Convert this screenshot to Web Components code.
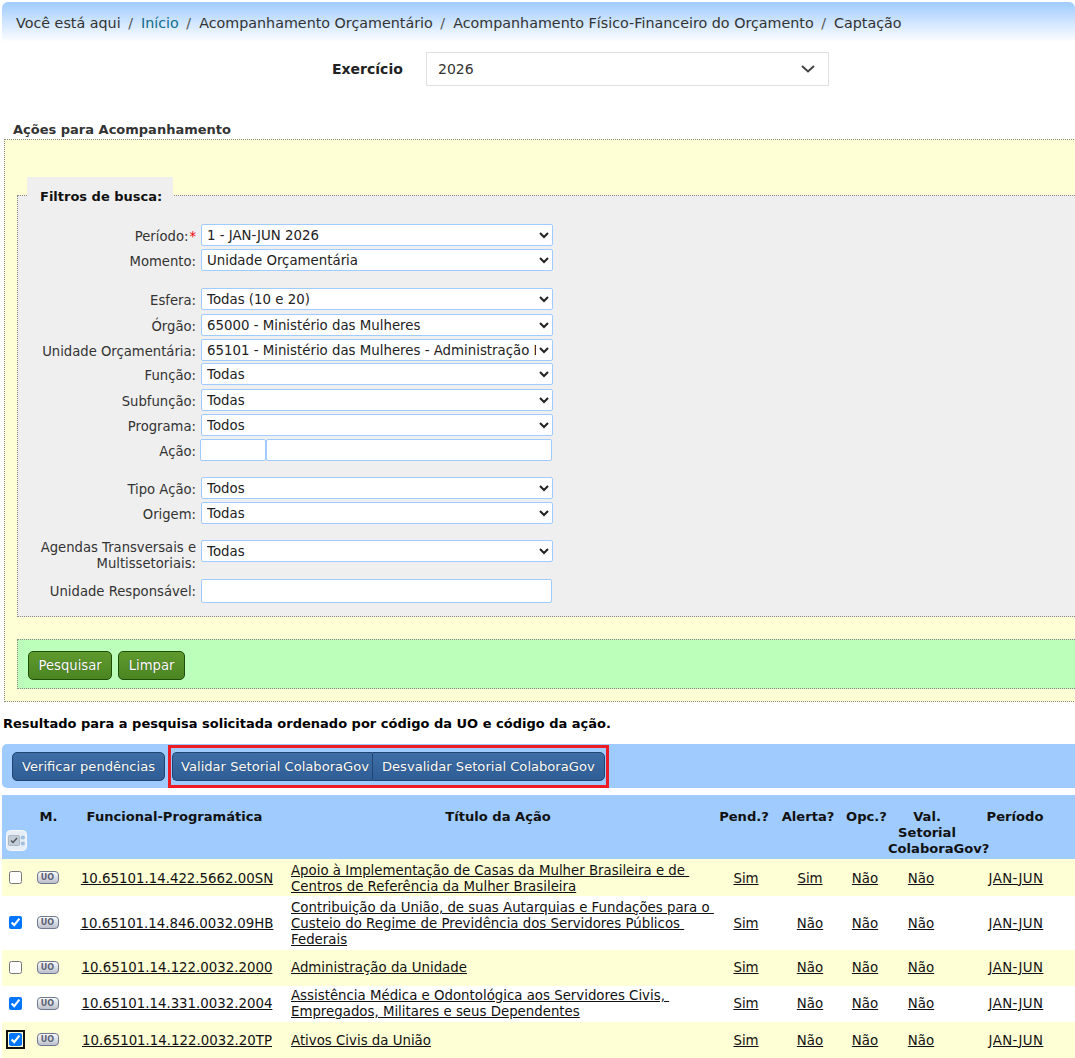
<!DOCTYPE html>
<html lang="pt-BR">
<head>
<meta charset="utf-8">
<title>Captação</title>
<style>
  html, body { margin: 0; padding: 0; overflow: hidden; background: #fff; height: 1058px; }
  body { font-family: "DejaVu Sans", Verdana, sans-serif; font-size: 13px; color: #000; }
</style>
</head>
<body>
<app-page>
  <bread-crumb>
    <span>Você está aqui</span>
    <a>Início</a>
    <span>Acompanhamento Orçamentário</span>
    <span>Acompanhamento Físico-Financeiro do Orçamento</span>
    <span>Captação</span>
  </bread-crumb>
  <year-picker label="Exercício" value="2026"></year-picker>
  <action-panel title="Ações para Acompanhamento">
    <filter-box legend="Filtros de busca:">
      <filter-row label="Período:" required value="1 - JAN-JUN 2026"></filter-row>
      <filter-row label="Momento:" value="Unidade Orçamentária"></filter-row>
      <filter-row label="Esfera:" value="Todas (10 e 20)" group></filter-row>
      <filter-row label="Órgão:" value="65000 - Ministério das Mulheres" style="margin-top:1px"></filter-row>
      <filter-row label="Unidade Orçamentária:" value="65101 - Ministério das Mulheres - Administração Direta"></filter-row>
      <filter-row label="Função:" value="Todas" style="margin-top:-1px"></filter-row>
      <filter-row label="Subfunção:" value="Todas" style="margin-top:1px"></filter-row>
      <filter-row label="Programa:" value="Todos"></filter-row>
      <filter-row label="Ação:" type="pair"></filter-row>
      <filter-row label="Tipo Ação:" value="Todos" group style="margin-top:13px"></filter-row>
      <filter-row label="Origem:" value="Todas"></filter-row>
      <filter-row label="Agendas Transversais e Multissetoriais:" value="Todas" group tall style="margin-top:13px"></filter-row>
      <filter-row label="Unidade Responsável:" type="text"></filter-row>
    </filter-box>
    <button-bar>
      <app-button tone="green">Pesquisar</app-button>
      <app-button tone="green">Limpar</app-button>
    </button-bar>
  </action-panel>
  <result-note>Resultado para a pesquisa solicitada ordenado por código da UO e código da ação.</result-note>
  <tool-bar>
    <app-button tone="blue">Verificar pendências</app-button>
    <mark-frame>
      <app-button tone="blue" join="left">Validar Setorial ColaboraGov</app-button>
      <app-button tone="blue" join="right">Desvalidar Setorial ColaboraGov</app-button>
    </mark-frame>
  </tool-bar>
  <result-table></result-table>
</app-page>

<script>
class AppPage extends HTMLElement {
  constructor() {
    super();
    this.attachShadow({mode: 'open'}).innerHTML = `<style>
      :host { display: block; width: 1075px; height: 1058px; overflow: hidden; }
    </style><slot></slot>`;
  }
}

class BreadCrumb extends HTMLElement {
  constructor() {
    super();
    this.attachShadow({mode: 'open'}).innerHTML = `<style>
      :host {
        display: flex; align-items: center; box-sizing: border-box;
        margin: 2px 0 0 2px; height: 40px; padding: 2px 0 0 14px;
        border-radius: 6px 6px 0 0;
        background: linear-gradient(180deg, #9fcbff 0%, #ffffff 100%);
        color: #333; font-size: 14.3px; white-space: nowrap;
      }
      ::slotted(a) { color: #0f6c8c; }
      ::slotted(*:not(:last-child))::after { content: "/"; color: #555; margin: 0 8px 0 7.5px; }
    </style><slot></slot>`;
  }
}

class YearPicker extends HTMLElement {
  constructor() {
    super();
    this.attachShadow({mode: 'open'}).innerHTML = `<style>
      :host { display: flex; align-items: center; margin: 10px 0 0 332px; height: 34px; }
      b { width: 94px; font-size: 14px; color: #222; }
      .box {
        box-sizing: border-box; width: 403px; height: 34px; display: flex;
        align-items: center; justify-content: space-between; padding: 0 13px 0 11px;
        border: 1px solid #e0e0e0; font-size: 14px; color: #333;
      }
    </style>
    <b>${this.getAttribute('label')}</b>
    <div class="box"><span>${this.getAttribute('value')}</span>
      <svg width="14" height="8" viewBox="0 0 14 8"><path d="M1 1l6 5.5L13 1" fill="none" stroke="#444" stroke-width="2"/></svg>
    </div>`;
  }
}

class ActionPanel extends HTMLElement {
  constructor() {
    super();
    this.attachShadow({mode: 'open'}).innerHTML = `<style>
      :host { display: block; margin-top: 36px; }
      h2 { margin: 0 0 1px 13px; font-size: 13px; line-height: 16px; color: #333; }
      .body {
        box-sizing: border-box; margin-left: 4px; width: 1100px; height: 563px;
        padding: 37px 0 0 12px; background: #ffffd5; border: 1px dotted #888;
      }
    </style>
    <h2>${this.getAttribute('title')}</h2>
    <div class="body"><slot></slot></div>`;
  }
}

class FilterBox extends HTMLElement {
  constructor() {
    super();
    this.attachShadow({mode: 'open'}).innerHTML = `<style>
      :host { display: block; position: relative; padding-top: 18px; }
      .legend {
        position: absolute; left: 10px; top: 0; box-sizing: border-box;
        width: 146px; height: 30px; padding: 12px 0 0 13px;
        background: #efefef; font-weight: bold; font-size: 13px; color: #111; line-height: 16px;
      }
      .box {
        box-sizing: border-box; height: 422px; padding-top: 28px;
        background: #efefef; border: 1px dotted #888;
        display: flex; flex-direction: column;
      }
    </style>
    <div class="box"><slot></slot></div>
    <div class="legend">${this.getAttribute('legend')}</div>`;
  }
}

class FilterRow extends HTMLElement {
  constructor() {
    super();
    const type = this.getAttribute('type') || 'select';
    let control;
    if (type === 'select') {
      control = `<select><option>${this.getAttribute('value')}</option></select>`;
    } else if (type === 'pair') {
      control = `<input class="code"><input class="name">`;
    } else {
      control = `<input class="full">`;
    }
    const star = this.hasAttribute('required') ? '<i>*</i>' : '';
    this.attachShadow({mode: 'open'}).innerHTML = `<style>
      :host { display: grid; grid-template-columns: 178px 352px; column-gap: 5px; min-height: 25px; align-items: start; }
      :host([group]) { margin-top: 14px; }
      :host([tall]) { min-height: 39px; }
      label { text-align: right; font-size: 13.2px; color: #333; line-height: 16px; padding-top: 5px; }
      :host([tall]) label { padding-top: 0; }
      i { font-style: normal; color: #e00; margin-left: 1px; }
      .ctl { display: flex; }
      select, input {
        box-sizing: border-box; height: 22px; margin: 0; background: #fff;
        border: 1px solid #9fcbff; border-radius: 2px; font: 13.33px "DejaVu Sans", Verdana, sans-serif; color: #222;
      }
      select { width: 352px; padding-left: 1px; }
      .code { width: 66px; margin-left: -1px; }
      .name { width: 286px; }
      .full { width: 351px; height: 24px; }
    </style>
    <label>${this.getAttribute('label')}${star}</label>
    <div class="ctl">${control}</div>`;
  }
}

class ButtonBar extends HTMLElement {
  constructor() {
    super();
    this.attachShadow({mode: 'open'}).innerHTML = `<style>
      :host {
        display: flex; gap: 6px; align-items: center; box-sizing: border-box;
        margin-top: 22px; height: 50px; padding: 2px 0 0 10px;
        background: #bbffbb; border: 1px dotted #888;
      }
    </style><slot></slot>`;
  }
}

class AppButton extends HTMLElement {
  constructor() {
    super();
    this.attachShadow({mode: 'open'}).innerHTML = `<style>
      :host {
        display: inline-flex; align-items: center; box-sizing: border-box;
        height: 29px; padding: 0 9px; border-radius: 5px; font-size: 13.1px; color: #fff;
        white-space: nowrap; text-shadow: 0 0 1px rgba(0,0,0,.5);
      }
      :host([tone=green]) { padding: 0 9.5px; font-size: 13.2px; background: linear-gradient(180deg, #5f9a2e, #4b8522); border: 1px solid #1f4d0a; }
      :host([tone=blue]) { background: linear-gradient(180deg, #3e6fa6, #2f5d96); border: 1px solid #1f4570; }
      :host([join=left]) { border-radius: 5px 0 0 5px; border-right: 0; padding: 0 3px 0 8px; }
      :host([join=right]) { border-radius: 0 5px 5px 0; }
    </style><slot></slot>`;
  }
}

class ResultNote extends HTMLElement {
  constructor() {
    super();
    this.attachShadow({mode: 'open'}).innerHTML = `<style>
      :host { display: block; margin: 14px 0 12px 3px; font-weight: bold; font-size: 13px; line-height: 16px; color: #000; }
    </style><slot></slot>`;
  }
}

class ToolBar extends HTMLElement {
  constructor() {
    super();
    this.attachShadow({mode: 'open'}).innerHTML = `<style>
      :host {
        display: flex; align-items: center; gap: 3px; box-sizing: border-box;
        margin-left: 2px; height: 44px; padding-left: 10px;
        background: #9fcbff; border-radius: 5px 0 0 5px;
      }
    </style><slot></slot>`;
  }
}

class MarkFrame extends HTMLElement {
  constructor() {
    super();
    this.attachShadow({mode: 'open'}).innerHTML = `<style>
      :host {
        display: flex; align-items: center; box-sizing: border-box;
        height: 43px; padding: 0 1px; border: 3px solid #ed1c24;
      }
    </style><slot></slot>`;
  }
}

class UoIcon extends HTMLElement {
  constructor() {
    super();
    this.attachShadow({mode: 'open'}).innerHTML = `<style>
      :host {
        display: inline-flex; align-items: center; justify-content: center; box-sizing: border-box;
        width: 22px; height: 13px; margin-bottom: 1px; border-radius: 4px; border: 1px solid #6f7a90;
        background: linear-gradient(180deg, #fafbfc, #bcc0cc);
        font: bold 8px "DejaVu Sans", sans-serif; color: #5a6072; vertical-align: middle;
      }
    </style>UO`;
  }
}

class CheckAll extends HTMLElement {
  constructor() {
    super();
    this.attachShadow({mode: 'open'}).innerHTML = `<style>
      :host { display: block; width: 21px; height: 21px; }
    </style>
    <svg width="21" height="21" viewBox="0 0 21 21">
      <rect x=".5" y=".5" width="20" height="20" rx="4" fill="#e6edf5" stroke="#f6f8fb"/>
      <rect x="2.5" y="5.5" width="11" height="10" rx="1" fill="#c3cdd9" stroke="#9aa8b8" stroke-width=".7"/>
      <path d="M5 10.5l2 2 4-4.5" fill="none" stroke="#4c4f55" stroke-width="1.3"/>
      <circle cx="16.8" cy="7.5" r="2.1" fill="#9fc0de"/>
      <circle cx="16.8" cy="13.5" r="2.1" fill="#9fc0de"/>
    </svg>`;
  }
}

const ROWS = [
  {code: '10.65101.14.422.5662.00SN', title: 'Apoio à Implementação de Casas da Mulher Brasileira e de&nbsp;<br>Centros de Referência da Mulher Brasileira', vals: ['Sim', 'Sim', 'Não', 'Não'], h: 37, pad: 2},
  {code: '10.65101.14.846.0032.09HB', title: 'Contribuição da União, de suas Autarquias e Fundações para o&nbsp;<br>Custeio do Regime de Previdência dos Servidores Públicos&nbsp;<br>Federais', vals: ['Sim', 'Não', 'Não', 'Não'], checked: true, h: 54, pad: 1},
  {code: '10.65101.14.122.0032.2000', title: 'Administração da Unidade', vals: ['Sim', 'Não', 'Não', 'Não'], h: 36, pad: 0},
  {code: '10.65101.14.331.0032.2004', title: 'Assistência Médica e Odontológica aos Servidores Civis,&nbsp;<br>Empregados, Militares e seus Dependentes', vals: ['Sim', 'Não', 'Não', 'Não'], checked: true, h: 36, pad: 0},
  {code: '10.65101.14.122.0032.20TP', title: 'Ativos Civis da União', vals: ['Sim', 'Não', 'Não', 'Não'], checked: true, focus: true, h: 36, pad: 1}
];

class ResultTable extends HTMLElement {
  constructor() {
    super();
    const rows = ROWS.map(r => `<tr style="height:${r.h}px;--pad:${r.pad}px">
      <td><input type="checkbox"${r.checked ? ' checked' : ''}${r.focus ? ' class="focus"' : ''}></td>
      <td><uo-icon></uo-icon></td>
      <td class="c"><a>${r.code}</a></td>
      <td class="t"><a>${r.title}</a></td>
      ${r.vals.map(v => `<td class="c"><a>${v}</a></td>`).join('')}
      <td class="c"><a class="per">JAN-JUN</a></td>
    </tr>`).join('');
    this.attachShadow({mode: 'open'}).innerHTML = `<style>
      :host { display: block; margin: 7px 0 0 2px; }
      table { border-collapse: collapse; table-layout: fixed; width: 1074px; font-size: 13.33px; }
      th { background: #9fcbff; height: 50px; padding: 14px 0 0; vertical-align: top; font-weight: bold; font-size: 13.1px; line-height: 16px; color: #111; }
      th:first-child { position: relative; }
      td { padding: 0; text-align: center; line-height: 16px; color: #111; }
      tr:nth-child(odd) td { background: #ffffd5; }
      td.c, td.t { padding-top: var(--pad); }
      td.t { text-align: left; padding-left: 3px; }
      a { text-decoration: underline; color: #111; }
      a.per { letter-spacing: .4px; }
      input { margin: 0 0 1px; width: 13px; height: 13px; vertical-align: middle; }
      input.focus { outline: 2px solid #111; outline-offset: 1px; border-radius: 2px; }
      check-all { position: absolute; left: 4px; bottom: 8px; }
      .val { width: 78px; margin-left: 2px; position: relative; z-index: 1; }
    </style>
    <table>
      <colgroup>
        <col style="width:27px"><col style="width:37px"><col style="width:222px"><col style="width:428px">
        <col style="width:60px"><col style="width:68px"><col style="width:42px"><col style="width:70px"><col style="width:120px">
      </colgroup>
      <thead><tr>
        <th><check-all></check-all></th>
        <th style="padding-left:2px">M.</th>
        <th style="padding-right:5px">Funcional-Programática</th>
        <th style="padding-right:8px">Título da Ação</th>
        <th style="padding-right:4px">Pend.?</th>
        <th style="padding-right:4px">Alerta?</th>
        <th style="padding-left:2px">Opc.?</th>
        <th><div class="val">Val. Setorial ColaboraGov?</div></th>
        <th style="padding-right:2px">Período</th>
      </tr></thead>
      <tbody>${rows}</tbody>
    </table>`;
  }
}

customElements.define('app-page', AppPage);
customElements.define('bread-crumb', BreadCrumb);
customElements.define('year-picker', YearPicker);
customElements.define('action-panel', ActionPanel);
customElements.define('filter-box', FilterBox);
customElements.define('filter-row', FilterRow);
customElements.define('button-bar', ButtonBar);
customElements.define('app-button', AppButton);
customElements.define('result-note', ResultNote);
customElements.define('tool-bar', ToolBar);
customElements.define('mark-frame', MarkFrame);
customElements.define('uo-icon', UoIcon);
customElements.define('check-all', CheckAll);
customElements.define('result-table', ResultTable);
</script>
</body>
</html>
